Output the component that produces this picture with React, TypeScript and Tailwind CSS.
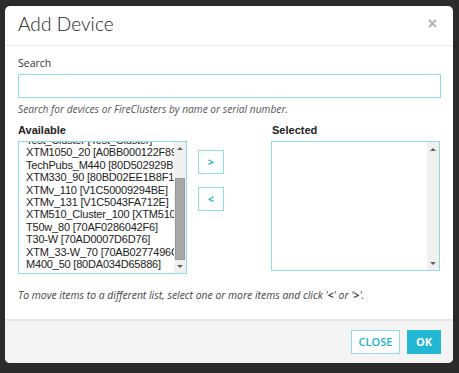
const available = [
  'Test_Cluster [Test_Cluster]',
  'XTM1050_20 [A0BB000122F89]',
  'TechPubs_M440 [80D502929B77A]',
  'XTM330_90 [80BD02EE1B8F1]',
  'XTMv_110 [V1C50009294BE]',
  'XTMv_131 [V1C5043FA712E]',
  'XTM510_Cluster_100 [XTM510_Cluster]',
  'T50w_80 [70AF0286042F6]',
  'T30-W [70AD0007D6D76]',
  'XTM_33-W_70 [70AB0277496C7]',
  'M400_50 [80DA034D65886]',
];

const Scrollbar = ({ thumb }: { thumb: boolean }) => (
  <div className="w-[12px] shrink-0 flex flex-col bg-[#f0f0f0]">
    <div className="h-[14px] flex items-center justify-center">
      <span className="w-0 h-0 border-x-[3px] border-x-transparent border-b-[3px] border-b-[#606060]" />
    </div>
    <div className="flex-1 px-[1px]">
      {thumb && <div className="mt-[22px] h-[82px] bg-[#a8a8a8] border border-[#999]" />}
    </div>
    <div className="h-[14px] flex items-center justify-center">
      <span className="w-0 h-0 border-x-[3px] border-x-transparent border-t-[3px] border-t-[#606060]" />
    </div>
  </div>
);

const App = () => {
  return (
    <div className="w-[459px] h-[373px] bg-[#2b2b2b] pt-[6px] pl-[5px] pr-[6px] overflow-hidden">
      <div className="w-[448px] h-[357px] bg-white rounded-[5px] overflow-hidden flex flex-col">
        {/* Header */}
        <div className="h-[40px] flex items-center justify-between pl-[13px] pr-[16px] border-b border-[#e5e5e5]">
          <h1 className="text-[19px] text-[#222] font-['Lato',sans-serif] font-light tracking-[0.1px] -mt-[3px]">
            Add Device
          </h1>
          <span className="text-[16px] leading-none text-[#b0b0b0] font-bold font-['Liberation_Sans',sans-serif] -mt-[3px]">
            ×
          </span>
        </div>

        {/* Body */}
        <div className="flex-1 px-[13px] pt-[10px] font-['Open_Sans',sans-serif]">
          <label className="block text-[10.5px] text-[#333] leading-[15px]">Search</label>
          <input className="mt-[3px] block w-[423px] h-[24px] border border-[#8fdbe9] outline-none" />
          <p className="mt-[4px] text-[10.2px] italic text-[#555] leading-[15px]">
            Search for devices or FireClusters by name or serial number.
          </p>

          <div className="mt-[7px] flex font-['Liberation_Sans',sans-serif]">
            <div className="w-[169px]">
              <div className="text-[11px] font-bold text-[#222] leading-[13px] h-[17px]">Available</div>
              <div className="h-[133px] border border-[#8fdbe9] flex overflow-hidden">
                <div className="flex-1 overflow-hidden pl-[7px] pt-[1px]">
                  <div className="-mt-[9px] text-[11px] tracking-[-0.2px] leading-[12.4px] text-[#222] whitespace-nowrap">
                    {available.map((d) => (
                      <div key={d}>{d}</div>
                    ))}
                  </div>
                </div>
                <Scrollbar thumb />
              </div>
            </div>

            <div className="ml-[11px] pt-[26px] flex flex-col gap-[13px]">
              <button className="w-[26px] h-[24px] border border-[#8fdbe9] bg-white text-[#1bb3d0] text-[11px] font-bold font-['Open_Sans',sans-serif]">
                &gt;
              </button>
              <button className="w-[26px] h-[24px] border border-[#8fdbe9] bg-white text-[#1bb3d0] text-[11px] font-bold font-['Open_Sans',sans-serif]">
                &lt;
              </button>
            </div>

            <div className="ml-[47px] w-[169px]">
              <div className="text-[11px] font-bold text-[#222] leading-[13px] h-[17px] pl-[1px]">Selected</div>
              <div className="h-[130px] border border-[#8fdbe9] flex">
                <div className="flex-1" />
                <Scrollbar thumb={false} />
              </div>
            </div>
          </div>

          <p className="mt-[14px] text-[10.4px] italic text-[#444] leading-[15px]">
            To move items to a different list, select one or more items and click '<b className="not-italic">&lt;</b>' or '<b className="not-italic">&gt;</b>'.
          </p>
        </div>

        {/* Footer */}
        <div className="h-[44px] bg-[#f4f4f4] border-t-2 border-[#e6e6e6] flex items-center justify-end gap-[7px] pr-[12px] font-['Open_Sans',sans-serif]">
          <button className="w-[49px] h-[24px] bg-white border border-[#8fdbe9] text-[#1bb3d0] text-[11px] font-semibold">
            CLOSE
          </button>
          <button className="w-[34px] h-[24px] bg-[#22b8d4] text-white text-[11px] font-bold">
            OK
          </button>
        </div>
      </div>
    </div>
  );
};

export default App;
